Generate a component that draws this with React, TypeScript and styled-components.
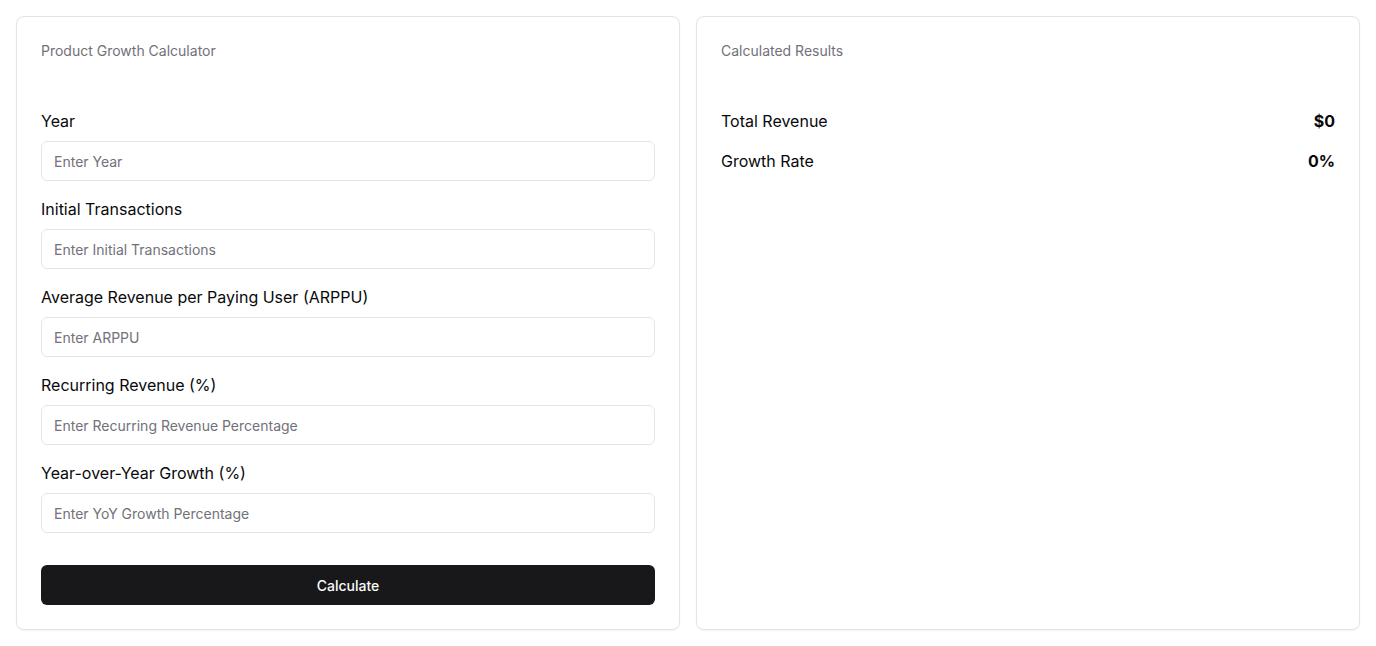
import React from "react";
import styled, { createGlobalStyle } from "styled-components";

const Global = createGlobalStyle`
  * { box-sizing: border-box; }
  body {
    margin: 0;
    background: #ffffff;
    font-family: Inter, "Liberation Sans", sans-serif;
    color: #09090b;
  }
`;

const Page = styled.div`
  display: grid;
  grid-template-columns: 1fr 1fr;
  gap: 16px;
  padding: 16px;
`;

const Card = styled.div`
  border: 1px solid #e4e4e7;
  border-radius: 8px;
  background: #fff;
  box-shadow: 0 1px 2px rgba(0, 0, 0, 0.05);
  display: flex;
  flex-direction: column;
`;

const Header = styled.div`
  padding: 24px 24px 0;
`;

const Title = styled.h2`
  margin: 0;
  font-size: 14px;
  line-height: 20px;
  font-weight: 400;
  color: #71717a;
`;

const Content = styled.div`
  padding: 48px 24px 24px;
  display: flex;
  flex-direction: column;
`;

const Field = styled.div`
  display: flex;
  flex-direction: column;
  gap: 8px;
  margin-bottom: 16px;
`;

const Label = styled.label`
  font-size: 16px;
  line-height: 24px;
  font-weight: 400;
  color: #09090b;
`;

const Input = styled.input`
  height: 40px;
  width: 100%;
  border: 1px solid #e4e4e7;
  border-radius: 6px;
  padding: 0 12px;
  font-family: inherit;
  font-size: 14px;
  color: #09090b;
  background: #fff;
  outline: none;
  &::placeholder {
    color: #71717a;
  }
`;

const Button = styled.button`
  margin-top: 16px;
  height: 40px;
  width: 100%;
  border: none;
  border-radius: 6px;
  background: #18181b;
  color: #fafafa;
  font-family: inherit;
  font-size: 14px;
  font-weight: 500;
  cursor: pointer;
`;

const Rows = styled.div`
  display: flex;
  flex-direction: column;
  gap: 16px;
`;

const Row = styled.div`
  display: flex;
  justify-content: space-between;
  align-items: center;
  font-size: 16px;
  line-height: 24px;
`;

const Value = styled.span`
  font-weight: 700;
`;

const fields = [
  { label: "Year", placeholder: "Enter Year" },
  { label: "Initial Transactions", placeholder: "Enter Initial Transactions" },
  { label: "Average Revenue per Paying User (ARPPU)", placeholder: "Enter ARPPU" },
  { label: "Recurring Revenue (%)", placeholder: "Enter Recurring Revenue Percentage" },
  { label: "Year-over-Year Growth (%)", placeholder: "Enter YoY Growth Percentage" },
];

export default function App() {
  return (
    <>
      <Global />
      <Page>
        <Card>
          <Header>
            <Title>Product Growth Calculator</Title>
          </Header>
          <Content>
            {fields.map((f) => (
              <Field key={f.label}>
                <Label>{f.label}</Label>
                <Input placeholder={f.placeholder} />
              </Field>
            ))}
            <Button>Calculate</Button>
          </Content>
        </Card>
        <Card>
          <Header>
            <Title>Calculated Results</Title>
          </Header>
          <Content>
            <Rows>
              <Row>
                <span>Total Revenue</span>
                <Value>$0</Value>
              </Row>
              <Row>
                <span>Growth Rate</span>
                <Value>0%</Value>
              </Row>
            </Rows>
          </Content>
        </Card>
      </Page>
    </>
  );
}
